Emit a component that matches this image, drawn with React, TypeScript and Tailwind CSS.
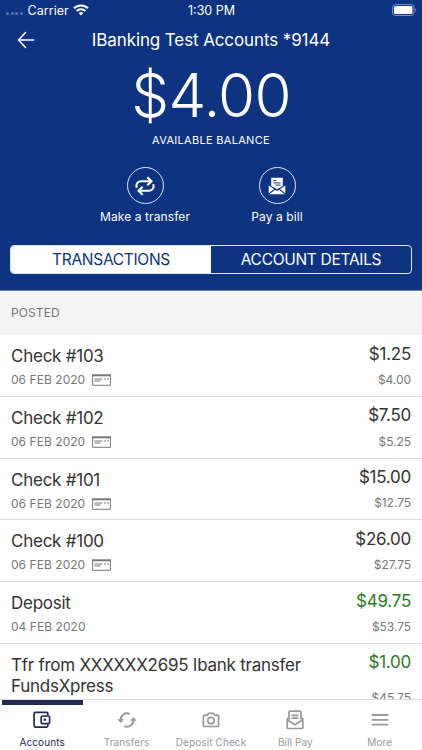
import type { ReactNode } from 'react'

interface Transaction {
  title: string
  date?: string
  amount: string
  balance: string
  check?: boolean
  credit?: boolean
}

const transactions: Transaction[] = [
  { title: 'Check #103', date: '06 FEB 2020', amount: '$1.25', balance: '$4.00', check: true },
  { title: 'Check #102', date: '06 FEB 2020', amount: '$7.50', balance: '$5.25', check: true },
  { title: 'Check #101', date: '06 FEB 2020', amount: '$15.00', balance: '$12.75', check: true },
  { title: 'Check #100', date: '06 FEB 2020', amount: '$26.00', balance: '$27.75', check: true },
  { title: 'Deposit', date: '04 FEB 2020', amount: '$49.75', balance: '$53.75', credit: true },
  { title: 'Tfr from XXXXXX2695 Ibank transfer FundsXpress', amount: '$1.00', balance: '$45.75', credit: true },
]

function StatusBar() {
  return (
    <div className="grid h-5 grid-cols-3 items-center pl-[6px] pr-[5px] text-[12.5px]">
      <div className="flex items-center">
        <div className="mt-[7px] flex gap-[1.5px]">
          {[0, 1, 2, 3].map((dot) => (
            <span key={dot} className="size-[3px] rounded-full bg-[#5a74ac]" />
          ))}
        </div>
        <span className="ml-[5px] pt-[1px] tracking-[0.05px]">Carrier</span>
        <svg className="ml-[4px]" width="16" height="12" viewBox="0 0 16 12" fill="none" stroke="#fff">
          <path d="M1 4.3a10 10 0 0 1 14 0" strokeWidth="2.1" />
          <path d="M3.6 7a6.3 6.3 0 0 1 8.8 0" strokeWidth="2" />
          <path d="M8 11.6 5.6 9.1a3.5 3.5 0 0 1 4.8 0z" fill="#fff" stroke="none" />
        </svg>
      </div>
      <span className="pt-[2px] text-center">1:30 PM</span>
      <svg className="justify-self-end" width="25" height="12" viewBox="0 0 25 12" fill="none">
        <rect x="0.5" y="0.5" width="21.5" height="11" rx="3" stroke="#7d92c2" />
        <rect x="2" y="2" width="18.5" height="8" rx="1.5" fill="#fff" />
        <path d="M23.3 4.2c1.3.5 1.3 3.1 0 3.6z" fill="#7d92c2" />
      </svg>
    </div>
  )
}

function BackIcon() {
  return (
    <svg width="18" height="18" viewBox="0 0 18 18" fill="none" stroke="#fff" strokeWidth="1.6" strokeLinecap="round" strokeLinejoin="round">
      <path d="M8.5 1.5 1.5 9l7 7.5M1.7 9h15" />
    </svg>
  )
}

function RepeatIcon() {
  return (
    <svg width="20" height="20" viewBox="0 0 20 20" fill="none" stroke="#fff" strokeWidth="2.1">
      <path d="M1.7 11.8C.7 7.800 2.700 5.200 6.500 5.200H15.500" />
      <path d="M18.300 8.200c1 4-1 6.600-4.800 6.600H4.500" />
      <path d="m12.300 1.200 4.200 4-4.200 4M7.700 10.800l-4.200 4 4.200 4" />
    </svg>
  )
}

function BillIcon() {
  return (
    <svg width="18" height="18" viewBox="0 0 18 18">
      <path d="M3.200.7h11.600v8.400L9 12.300 3.200 9.100z" fill="#fff" />
      <path d="M5.500 3.700h3M5.500 5.900h7M7.500 8.100h5" stroke="#0d3381" strokeWidth="1" />
      <path d="M.7 8.500 6 12 .7 16.200zM17.300 8.500 12 12l5.300 4.200zM1.300 17.300 7 12.700l2 1.200 2-1.200 5.700 4.600z" fill="#fff" />
    </svg>
  )
}

function CheckIcon() {
  return (
    <svg width="19" height="12" viewBox="0 0 19 12" fill="none" stroke="#777">
      <path d="M.6 1v10.300h17.800V1" strokeWidth="1" />
      <path d="M0 1.300h19" strokeWidth="2" />
      <path d="M2.500 5h8M2.500 7h6M12 5h2M15 5h2" strokeWidth="1" />
    </svg>
  )
}

function WalletIcon() {
  return (
    <svg width="18" height="18" viewBox="0 0 18 18" fill="none" stroke="currentColor" strokeWidth="1.700">
      <path d="M14.800 4.500V2.600A1.300 1.300 0 0 0 13.500 1.300H2.400A1.300 1.300 0 0 0 1.100 2.600v12.200a1.300 1.300 0 0 0 1.300 1.300h11.100a1.300 1.300 0 0 0 1.300-1.300v-1.500" />
      <rect x="8.200" y="5" width="8.400" height="7.600" rx="1.200" />
      <circle cx="11.800" cy="8.800" r="1.300" fill="currentColor" stroke="none" />
    </svg>
  )
}

function SyncIcon() {
  return (
    <svg width="20" height="18" viewBox="0 0 20 18" fill="none" stroke="currentColor" strokeWidth="1.900">
      <path d="M3.700 9.500A6.400 6.400 0 0 1 12.800 2.900" />
      <path d="M16.300 8.500A6.400 6.400 0 0 1 7.200 15.100" />
      <path d="M.3 8.300h6.800L3.700 12zM12.900 9.700h6.800L16.300 6z" fill="currentColor" stroke="none" />
    </svg>
  )
}

function CameraIcon() {
  return (
    <svg width="18" height="18" viewBox="0 0 18 18" fill="none" stroke="currentColor" strokeWidth="1.700">
      <path d="M2.400 4.200h2.800L6.700 2.300h4.600l1.500 1.900h2.800a1 1 0 0 1 1 1v9.300a1 1 0 0 1-1 1H2.400a1 1 0 0 1-1-1V5.200a1 1 0 0 1 1-1z" />
      <circle cx="9" cy="9.600" r="3.200" />
    </svg>
  )
}

function BillPayIcon() {
  return (
    <svg width="18" height="20" viewBox="0 0 18 20" fill="none" stroke="currentColor" strokeWidth="1.700">
      <path d="M3 9.500V2.200A1 1 0 0 1 4 1.200h10a1 1 0 0 1 1 1v7.300" />
      <path d="M3 7.500 1.200 9v8.500a1 1 0 0 0 1 1h13.600a1 1 0 0 0 1-1V9L15 7.500" />
      <path d="m1.500 10 7.500 4.800 7.500-4.800M5.500 5.300h7M5.500 8.200h7" />
    </svg>
  )
}

function MenuIcon() {
  return (
    <svg width="18" height="18" viewBox="0 0 18 18" stroke="currentColor" strokeWidth="1.800">
      <path d="M.7 4h16.600M.7 8.800h16.600M.7 13.600h16.600" />
    </svg>
  )
}

function Action({ label, children }: { label: string; children: ReactNode }) {
  return (
    <button className="flex w-[132px] flex-col items-center">
      <span className="flex size-[37px] items-center justify-center rounded-full border border-[#dfe6f4]">{children}</span>
      <span className="mt-[5px] text-[12px] leading-4 tracking-[0.1px]">{label}</span>
    </button>
  )
}

function TransactionRow({ item }: { item: Transaction }) {
  return (
    <li
      className={`flex shrink-0 justify-between border-b border-[#dcdcdc] px-[11px] ${item.date ? 'h-[61.8px]' : 'h-[71px]'}`}
    >
      <div className="w-[300px] pt-[11px]">
        <p className="text-[17px] leading-[21px] tracking-[-0.25px] text-[#333]">{item.title}</p>
        {item.date && (
          <p className="mt-[5px] flex items-center text-[12px] leading-4 tracking-[0.05px] text-[#777]">
            {item.date}
            {item.check && (
              <span className="ml-[7px]">
                <CheckIcon />
              </span>
            )}
          </p>
        )}
      </div>
      <div className="flex flex-col justify-between pt-[8.5px] pb-[8px] text-right">
        <p className={`text-[17px] leading-[21px] tracking-[-0.25px] ${item.credit ? 'text-[#2c7a1f]' : 'text-[#333]'}`}>
          {item.amount}
        </p>
        <p className="text-[12px] leading-4 tracking-[-0.05px] text-[#777]">{item.balance}</p>
      </div>
    </li>
  )
}

const tabs = [
  { label: 'Accounts', icon: <WalletIcon />, active: true },
  { label: 'Transfers', icon: <SyncIcon /> },
  { label: 'Deposit Check', icon: <CameraIcon /> },
  { label: 'Bill Pay', icon: <BillPayIcon /> },
  { label: 'More', icon: <MenuIcon /> },
]

export default function App() {
  return (
    <div className="flex h-[750px] w-[422px] flex-col overflow-hidden bg-white font-['Inter',sans-serif]">
      <header className="h-[291px] shrink-0 border-b border-[#6f84b4] bg-[#0d3381] text-white">
        <StatusBar />
        <div className="grid h-[40px] grid-cols-[40px_1fr_40px] items-center">
          <button className="pl-[17px]">
            <BackIcon />
          </button>
          <h1 className="pt-[2px] text-center text-[17px] tracking-[-0.11px]">IBanking Test Accounts *9144</h1>
        </div>
        <p className="h-[70px] text-center text-[60px] leading-[70px] font-light tracking-[-0.7px]">$4.00</p>
        <p className="mt-[2px] text-center text-[11px] leading-4 tracking-[0.3px]">AVAILABLE BALANCE</p>
        <div className="mt-[19px] flex justify-center">
          <Action label="Make a transfer">
            <RepeatIcon />
          </Action>
          <Action label="Pay a bill">
            <BillIcon />
          </Action>
        </div>
        <div className="mx-[10px] mt-[20px] flex h-[29px] overflow-hidden rounded-[4px] border border-[#dfe6f4] text-[15.5px] tracking-[-0.3px]">
          <button className="flex-1 bg-white text-[#0d3381]">TRANSACTIONS</button>
          <button className="flex-1">ACCOUNT DETAILS</button>
        </div>
      </header>

      <h2 className="flex h-[44px] shrink-0 items-center bg-[#f4f4f4] pl-[11px] text-[12px] tracking-[0.1px] text-[#777]">
        POSTED
      </h2>
      <ul className="flex min-h-0 flex-1 flex-col overflow-hidden">
        {transactions.map((item) => (
          <TransactionRow key={item.title} item={item} />
        ))}
      </ul>

      <nav className="grid h-[51px] shrink-0 grid-cols-5 border-t border-[#dcdcdc] bg-white">
        {tabs.map((tab) => (
          <button key={tab.label} className={`flex flex-col items-center ${tab.active ? 'text-[#1f2b52]' : 'text-[#999]'}`}>
            <span className={`h-[5px] w-[81px] ${tab.active ? 'bg-[#1f2b52]' : ''}`} />
            <span className="flex h-[29px] items-center">{tab.icon}</span>
            <span className="mt-[1px] text-[10px] leading-[15px] tracking-[0.1px] whitespace-nowrap">{tab.label}</span>
          </button>
        ))}
      </nav>
    </div>
  )
}
